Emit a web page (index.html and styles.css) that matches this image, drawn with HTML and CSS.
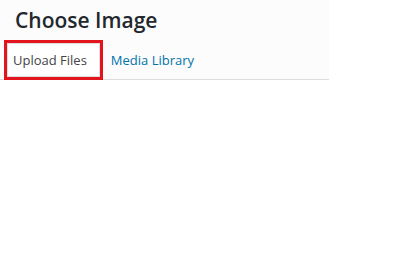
FILE: index.html
```html
<!DOCTYPE html>
<html lang="en">
<head>
<meta charset="utf-8">
<title>Choose Image</title>
<link rel="stylesheet" href="styles.css">
</head>
<body>
<div class="frame">
  <div class="frame-title"><h1>Choose Image</h1></div>
  <div class="router">
    <a class="tab active">Upload Files</a>
    <a class="tab">Media Library</a>
  </div>
</div>
</body>
</html>
```
FILE: styles.css
```css
html, body {
  margin: 0;
  padding: 0;
  background: #ffffff;
  font-family: "Open Sans", "Noto Sans", sans-serif;
}
.frame {
  width: 329px;
  background: #fcfcfc;
  border-bottom: 1px solid #dddddd;
}
.frame-title h1 {
  margin: 0;
  padding: 5px 0 0 15px;
  font-size: 21px;
  line-height: 30px;
  font-weight: 600;
  color: #23282d;
}
.router {
  display: flex;
  align-items: flex-end;
  padding: 8px 0 2px 7px;
}
.tab {
  display: block;
  font-size: 13px;
  line-height: 18px;
  padding: 7px 10px;
  border: 1px solid transparent;
  color: #0073aa;
  text-decoration: none;
}
.tab.active {
  background: #ffffff;
  border-color: #dddddd;
  color: #444444;
  padding-left: 5px;
  padding-right: 12px;
  outline: 3px solid #e4141f;
}
```
